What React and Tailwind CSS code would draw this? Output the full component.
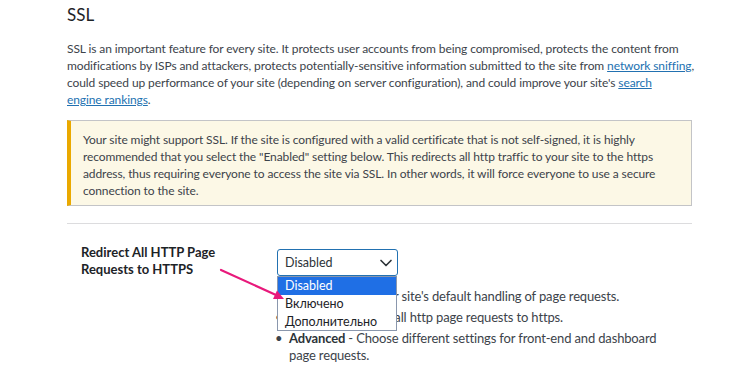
import React from 'react';
import { ChevronDown } from 'lucide-react';

const Link = ({ children }) => (
  <a href="#" className="text-[#2271b1] underline">
    {children}
  </a>
);

const Notice = () => (
  <div className="mt-[12px] border border-[#c3c4c7] border-l-4 border-l-[#eaa900] bg-[#fcf8e6] pl-[12px] pt-[10px] pb-[6px]">
    <p className="whitespace-nowrap">
      Your site might support SSL. If the site is configured with a valid certificate that is not self-signed, it is highly
      <br />
      recommended that you select the "Enabled" setting below. This redirects all http traffic to your site to the https
      <br />
      address, thus requiring everyone to access the site via SSL. In other words, it will force everyone to use a secure
      <br />
      connection to the site.
    </p>
  </div>
);

const Option = ({ label, active }) => (
  <div
    className={
      active
        ? 'h-[18px] pl-[7px] leading-[18px] bg-[#1f6fe5] text-white'
        : 'h-[18px] pl-[7px] leading-[18px] text-[#1d2327]'
    }
  >
    {label}
  </div>
);

const Bullet = ({ term, children }) => (
  <li className="flex mb-[4px]">
    <span className="w-[12px] shrink-0 -translate-x-[2px] text-[#3c434a]">•</span>
    <span className="whitespace-nowrap">
      <b className="text-[#2c3338]">{term}</b> - {children}
    </span>
  </li>
);

const RedirectSetting = () => (
  <div className="flex mt-[20px]">
    <div className="w-[210px] pl-[14px] text-[13px] tracking-normal font-bold leading-[17px] text-[#1d2327]">
      Redirect All HTTP Page
      <br />
      Requests to HTTPS
    </div>
    <div className="relative pt-[5px]">
      <div className="flex items-center justify-between w-[121px] h-[27px] pl-[7px] pr-[1px] border border-[#2271b1] rounded-[3px] text-[12.5px] tracking-normal text-[#2c3338]">
        <span>Disabled</span>
        <ChevronDown size={20} strokeWidth={2} className="text-[#2c3338]" />
      </div>
      <ul className="mt-[12px] text-[13px] tracking-[-0.15px] leading-[17px] text-[#3c434a]">
        <Bullet term="Disabled">Use your site's default handling of page requests.</Bullet>
        <Bullet term="Enabled">Redirect all http page requests to https.</Bullet>
        <Bullet term="Advanced">
          Choose different settings for front-end and dashboard
          <br />
          page requests.
        </Bullet>
      </ul>
      <div className="absolute left-0 top-[32px] w-[120px] h-[55px] border border-[#8a97ad] bg-white text-[12.5px] tracking-normal">
        <Option label="Disabled" active />
        <Option label="Включено" />
        <Option label="Дополнительно" />
      </div>
    </div>
  </div>
);

const App = () => (
  <div className="relative w-[750px] h-[376px] overflow-hidden bg-white font-['Lato',sans-serif] text-[12px] tracking-[-0.1px] leading-[17px] text-[#3c434a]">
    <div className="ml-[67px] w-[625px] pt-[4px]">
      <h2 className="text-[17px] leading-[22px] tracking-normal text-[#1d2327]">SSL</h2>
      <p className="mt-[14px] whitespace-nowrap">
        SSL is an important feature for every site. It protects user accounts from being compromised, protects the content from
        <br />
        modifications by ISPs and attackers, protects potentially-sensitive information submitted to the site from{' '}
        <Link>network sniffing</Link>,
        <br />
        could speed up performance of your site (depending on server configuration), and could improve your site's{' '}
        <Link>search</Link>
        <br />
        <Link>engine rankings</Link>.
      </p>
      <Notice />
      <div className="mt-[17px] border-t border-[#dcdcde]" />
      <RedirectSetting />
    </div>
    <svg className="absolute left-0 top-0 pointer-events-none" width="750" height="376">
      <line x1="221" y1="270" x2="276" y2="295" stroke="#e8197b" strokeWidth="2.2" strokeLinecap="round" />
      <polygon points="284,299 273,299 277,290.5" fill="#e8197b" />
    </svg>
  </div>
);

export default App;
